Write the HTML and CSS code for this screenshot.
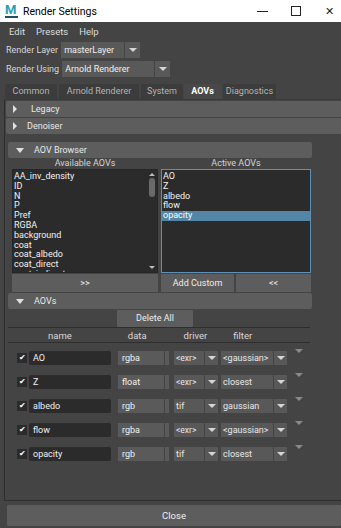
FILE: index.html
```html
<!DOCTYPE html>
<html lang="en">
<head>
    <meta charset="UTF-8">
    <title>Render Settings</title>
    <link rel="stylesheet" href="styles.css">
</head>
<body>
    <div class="titlebar">
        <span class="app-icon">M</span>
        <span class="title">Render Settings</span>
        <span class="win-btn min"></span>
        <span class="win-btn max"></span>
        <span class="win-btn close">&#x2715;</span>
    </div>

    <div class="menubar">
        <span>Edit</span>
        <span>Presets</span>
        <span>Help</span>
    </div>

    <div class="field-row">
        <span class="label">Render Layer</span>
        <div class="combo combo-layer">
            <span class="combo-text">masterLayer</span>
            <span class="combo-arrow"></span>
        </div>
    </div>
    <div class="field-row">
        <span class="label">Render Using</span>
        <div class="combo combo-renderer">
            <span class="combo-text">Arnold Renderer</span>
            <span class="combo-arrow"></span>
        </div>
    </div>

    <div class="tabs">
        <span class="tab tab-common">Common</span>
        <span class="tab tab-arnold">Arnold Renderer</span>
        <span class="tab tab-system">System</span>
        <span class="tab tab-aovs active">AOVs</span>
        <span class="tab tab-diag">Diagnostics</span>
    </div>

    <div class="tab-body">
        <div class="frame-bar wide"><span class="tri-right"></span><span class="frame-title legacy">Legacy</span></div>
        <div class="frame-bar wide"><span class="tri-right"></span><span class="frame-title">Denoiser</span></div>

        <div class="frame-bar narrow browser-bar"><span class="tri-down"></span><span class="frame-title">AOV Browser</span></div>
        <div class="browser">
            <div class="list-col left">
                <div class="list-head">Available AOVs</div>
                <div class="list available">
                    <div class="items">
                        <div>AA_inv_density</div>
                        <div>ID</div>
                        <div>N</div>
                        <div>P</div>
                        <div>Pref</div>
                        <div>RGBA</div>
                        <div>background</div>
                        <div>coat</div>
                        <div>coat_albedo</div>
                        <div>coat_direct</div>
                        <div>coat_indirect</div>
                    </div>
                    <div class="scrollbar">
                        <span class="sb-up"></span>
                        <span class="sb-thumb"></span>
                        <span class="sb-down"></span>
                    </div>
                </div>
                <div class="btn btn-add">&gt;&gt;</div>
            </div>
            <div class="list-col right">
                <div class="list-head">Active AOVs</div>
                <div class="list active-list">
                    <div class="items">
                        <div>AO</div>
                        <div>Z</div>
                        <div>albedo</div>
                        <div>flow</div>
                        <div class="selected">opacity</div>
                    </div>
                </div>
                <div class="btn-pair">
                    <div class="btn btn-custom">Add Custom</div>
                    <div class="btn btn-remove">&lt;&lt;</div>
                </div>
            </div>
        </div>

        <div class="frame-bar narrow"><span class="tri-down"></span><span class="frame-title">AOVs</span></div>
        <div class="btn btn-delete">Delete All</div>
        <div class="table-head">
            <span class="th th-name">name</span>
            <span class="th th-data">data</span>
            <span class="th th-driver">driver</span>
            <span class="th th-filter">filter</span>
        </div>

        <div class="aov-rows">
            <div class="aov-row">
                <span class="check">&#x2714;</span>
                <span class="name-field">AO</span>
                <span class="data-field">rgba</span><span class="data-grip"></span>
                <span class="drop driver">&lt;exr&gt;</span><span class="drop-arrow"></span>
                <span class="drop filter">&lt;gaussian&gt;</span><span class="drop-arrow"></span>
                <span class="row-menu"></span>
            </div>
            <div class="aov-row">
                <span class="check">&#x2714;</span>
                <span class="name-field">Z</span>
                <span class="data-field">float</span><span class="data-grip"></span>
                <span class="drop driver">&lt;exr&gt;</span><span class="drop-arrow"></span>
                <span class="drop filter">closest</span><span class="drop-arrow"></span>
                <span class="row-menu"></span>
            </div>
            <div class="aov-row">
                <span class="check">&#x2714;</span>
                <span class="name-field">albedo</span>
                <span class="data-field">rgb</span><span class="data-grip"></span>
                <span class="drop driver plain">tif</span><span class="drop-arrow"></span>
                <span class="drop filter">gaussian</span><span class="drop-arrow"></span>
                <span class="row-menu"></span>
            </div>
            <div class="aov-row">
                <span class="check">&#x2714;</span>
                <span class="name-field">flow</span>
                <span class="data-field">rgba</span><span class="data-grip"></span>
                <span class="drop driver">&lt;exr&gt;</span><span class="drop-arrow"></span>
                <span class="drop filter">&lt;gaussian&gt;</span><span class="drop-arrow"></span>
                <span class="row-menu"></span>
            </div>
            <div class="aov-row">
                <span class="check">&#x2714;</span>
                <span class="name-field">opacity</span>
                <span class="data-field">rgb</span><span class="data-grip"></span>
                <span class="drop driver plain">tif</span><span class="drop-arrow"></span>
                <span class="drop filter">closest</span><span class="drop-arrow"></span>
                <span class="row-menu"></span>
            </div>
        </div>
    </div>

    <div class="footer">
        <div class="btn btn-close">Close</div>
    </div>
</body>
</html>
```

FILE: styles.css
```css
body {
    margin: 0;
    width: 341px;
    height: 528px;
    overflow: hidden;
    background: #444444;
    font-family: Roboto, "Liberation Sans", sans-serif;
    font-size: 9px;
    color: #e6e6e6;
}

/* window chrome */
.titlebar {
    height: 22px;
    background: #ffffff;
    display: flex;
    align-items: center;
    color: #000;
    font-size: 10.5px;
}

.app-icon {
    width: 13px;
    margin-left: 5px;
    font-weight: bold;
    font-size: 13px;
    line-height: 12px;
    color: #25a0b0;
    border-bottom: 2px solid #1d4e72;
}

.title {
    margin-left: 5px;
    flex: 1;
}

.win-btn {
    display: inline-block;
    box-sizing: border-box;
}

.win-btn.min {
    width: 11px;
    height: 1px;
    background: #222;
    margin-right: 23px;
}

.win-btn.max {
    width: 10px;
    height: 10px;
    border: 1px solid #222;
    margin-right: 24px;
}

.win-btn.close {
    width: 11px;
    font-size: 11px;
    color: #222;
    margin-right: 5px;
}

.menubar {
    height: 18px;
    display: flex;
    align-items: center;
    padding-left: 9px;
    gap: 11px;
    font-size: 9.5px;
    color: #dcdcdc;
}

.field-row {
    height: 19px;
    display: flex;
    align-items: center;
    padding-left: 6px;
    color: #d8d8d8;
}

.label {
    margin-right: 3px;
}

.combo {
    height: 16px;
    display: flex;
}

.combo-layer {
    width: 79px;
}

.combo-renderer {
    width: 108px;
}

.combo-text {
    flex: 1;
    background: #595959;
    padding-left: 3px;
    line-height: 16px;
    color: #f0f0f0;
}

.combo-arrow {
    width: 15px;
    margin-left: 1px;
    background: #595959;
    display: flex;
    align-items: center;
    justify-content: center;
}

.combo-arrow::after,
.drop-arrow::after {
    content: "";
    border-left: 4px solid transparent;
    border-right: 4px solid transparent;
    border-top: 4px solid #d6d6d6;
}

/* tabs */
.tabs {
    margin-top: 6px;
    height: 15px;
    padding-left: 5px;
    display: flex;
    gap: 2px;
}

.tab {
    background: #3c3c3c;
    color: #b4b4b4;
    text-align: center;
    line-height: 15px;
    border-radius: 2px 2px 0 0;
}

.tab-common { width: 52px; }
.tab-arnold { width: 80px; }
.tab-system { width: 42px; }
.tab-aovs { width: 37px; margin-left: -1px; }
.tab-diag { width: 53px; }

.tab.active {
    background: #484848;
    color: #ffffff;
    font-weight: bold;
}

.tab-body {
    margin-left: 4px;
    height: 402px;
    border-left: 1px solid #2e2e2e;
    border-top: 1px solid #3a3a3a;
    border-bottom: 1px solid #2e2e2e;
    box-sizing: border-box;
    padding-top: 1px;
}

/* collapsible frames */
.frame-bar {
    height: 16px;
    background: #5d5d5d;
    display: flex;
    align-items: center;
    color: #e8e8e8;
    border-radius: 2px;
}

.frame-bar.wide {
    margin-left: 1px;
    margin-bottom: 1px;
    border-radius: 2px 0 0 2px;
}

.frame-bar.narrow {
    width: 304px;
    margin-left: 3px;
}

.browser-bar {
    margin-top: 8px;
}

.tri-right {
    margin-left: 7px;
    border-top: 4px solid transparent;
    border-bottom: 4px solid transparent;
    border-left: 4px solid #e0e0e0;
}

.frame-title {
    margin-left: 10px;
}

.frame-title.legacy {
    margin-left: 14px;
}

.tri-down {
    margin-left: 8px;
    border-left: 4px solid transparent;
    border-right: 4px solid transparent;
    border-top: 5px solid #e0e0e0;
}

/* AOV browser */
.browser {
    display: flex;
    padding-left: 7px;
    gap: 3px;
}

.list-col {
    display: flex;
    flex-direction: column;
}

.list-col.left { width: 146px; }
.list-col.right { width: 150px; }

.list-head {
    height: 11px;
    line-height: 11px;
    text-align: center;
    color: #d4d4d4;
}

.list {
    height: 104px;
    box-sizing: border-box;
    background: #2b2b2b;
    border: 1px solid #262626;
    display: flex;
    overflow: hidden;
}

.active-list {
    border-color: #5e8fb6;
}

.items {
    flex: 1;
    line-height: 9.8px;
    padding-top: 2px;
    color: #f2f2f2;
}

.items div {
    padding-left: 1px;
}

.items .selected {
    background: #5285a6;
    color: #ffffff;
}

.scrollbar {
    width: 8px;
    margin-right: 1px;
    display: flex;
    flex-direction: column;
    align-items: center;
}

.sb-up {
    margin-top: 3px;
    border-left: 3px solid transparent;
    border-right: 3px solid transparent;
    border-bottom: 3px solid #bdbdbd;
}

.sb-thumb {
    margin-top: 2px;
    width: 6px;
    height: 19px;
    background: #6a6a6a;
    border-radius: 3px;
    flex: none;
}

.sb-down {
    margin-top: auto;
    margin-bottom: 3px;
    border-left: 3px solid transparent;
    border-right: 3px solid transparent;
    border-top: 3px solid #bdbdbd;
}

.btn {
    height: 18px;
    line-height: 18px;
    background: #5d5d5d;
    text-align: center;
    color: #eeeeee;
    border-radius: 1px;
}

.btn-add {
    margin-top: 1px;
}

.btn-pair {
    display: flex;
    gap: 2px;
    margin-top: 1px;
}

.btn-custom { width: 73px; }
.btn-remove { flex: 1; }

.browser + .frame-bar {
    margin-top: 1px;
}

/* AOV table */
.btn-delete {
    width: 76px;
    height: 17px;
    line-height: 17px;
    margin: 1px 0 0 112px;
}

.table-head {
    width: 302px;
    height: 14px;
    margin-left: 3px;
    border-top: 1px solid #2e2e2e;
    border-bottom: 1px solid #2e2e2e;
    display: flex;
    align-items: center;
    color: #d8d8d8;
    font-size: 9.5px;
}

.th-name { margin-left: 40px; }
.th-data { margin-left: 56px; }
.th-driver { margin-left: 37px; }
.th-filter { margin-left: 26px; }

.aov-rows {
    padding-top: 7px;
    display: flex;
    flex-direction: column;
    gap: 9px;
}

.aov-row {
    height: 15px;
    display: flex;
    align-items: center;
    padding-left: 12px;
}

.check {
    width: 10px;
    height: 10px;
    background: #2b2b2b;
    color: #ffffff;
    font-size: 8px;
    line-height: 10px;
    text-align: center;
}

.name-field {
    width: 78px;
    height: 14px;
    margin-left: 2px;
    padding-left: 4px;
    background: #2b2b2b;
    border-radius: 2px;
    line-height: 14px;
    color: #f0f0f0;
}

.data-field {
    width: 42px;
    height: 14px;
    margin-left: 7px;
    padding-left: 4px;
    background: #5a5a5a;
    line-height: 15px;
    color: #f0f0f0;
}

.data-grip {
    width: 4px;
    height: 14px;
    margin-left: 1px;
    background: #5a5a5a;
}

.drop {
    height: 14px;
    line-height: 14px;
    background: #585858;
    padding-left: 2px;
    color: #e8e8e8;
    font-size: 8.5px;
}

.drop.driver {
    width: 28px;
    margin-left: 5px;
}

.drop.plain {
    font-size: 9px;
}

.drop.filter {
    width: 50px;
    margin-left: 3px;
    font-size: 9px;
}

.drop-arrow {
    width: 13px;
    height: 14px;
    margin-left: 1px;
    background: #585858;
    display: flex;
    align-items: center;
    justify-content: center;
}

.row-menu {
    align-self: flex-start;
    margin: -1px 0 0 8px;
    border-left: 4px solid transparent;
    border-right: 4px solid transparent;
    border-top: 4px solid #8a8a8a;
}

.footer {
    padding: 4px 0 0 7px;
}

.btn-close {
    height: 21px;
    line-height: 21px;
    font-size: 9.5px;
}
```
